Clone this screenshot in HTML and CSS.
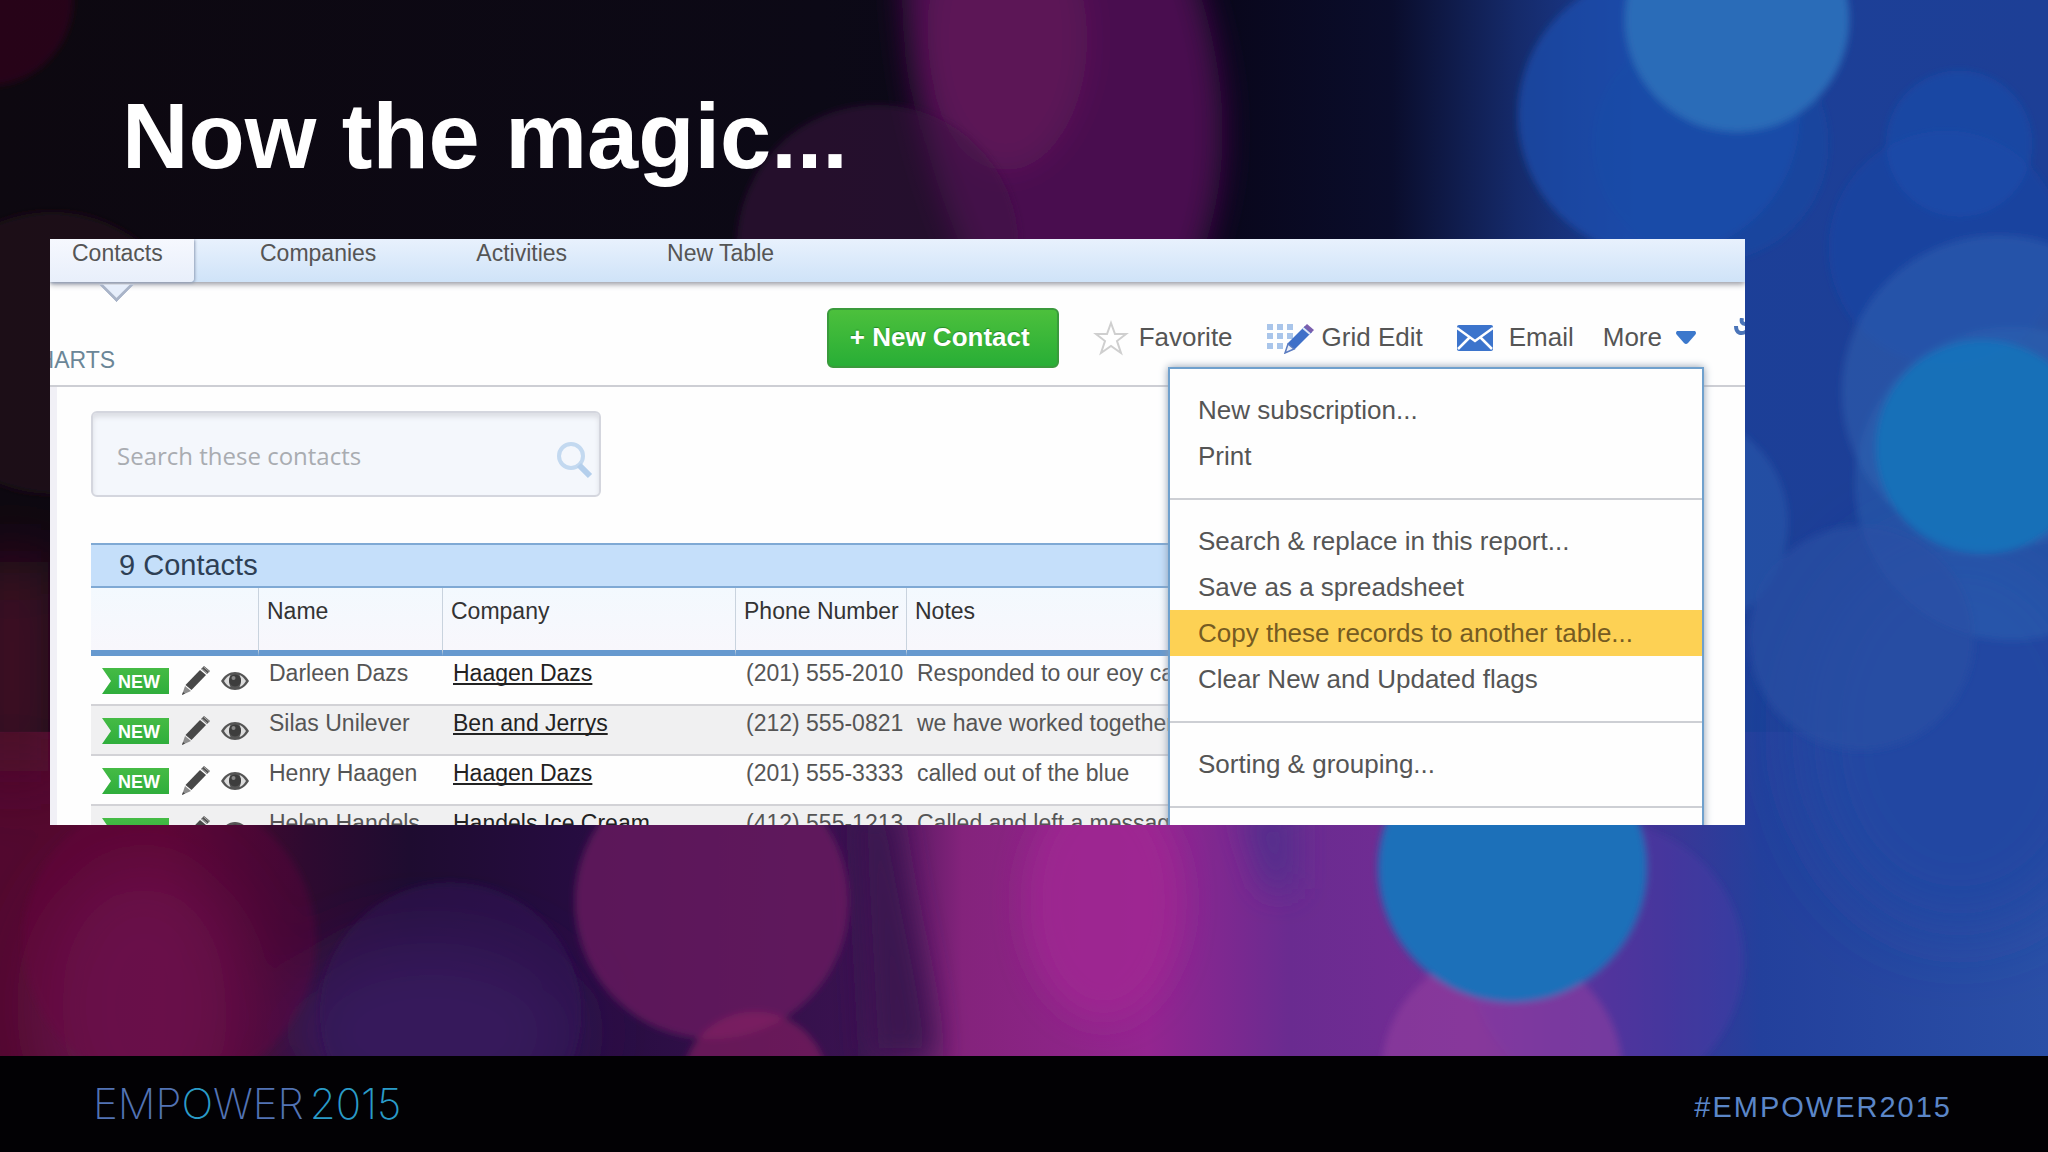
FILE: index.html
```html
<!DOCTYPE html>
<html lang="en">
<head>
<meta charset="utf-8">
<title>Now the magic…</title>
<link rel="stylesheet" href="styles.css">
</head>
<body>
<svg width="0" height="0" class="defs" aria-hidden="true">
  <symbol id="pencil" viewBox="0 0 30 30">
    <path d="M2 29l3-9 6 5z" fill="#8d8d8d"/><path d="M2 29l1-3 2 1.500z" fill="#444"/>
    <path d="M5.500 19L20 4l6 5-14.500 15z" fill="#484848"/>
    <path d="M21 3l3-3 6 5-3 3z" fill="#555"/><path d="M21.500 2.500l6 5M23.500 .8l6 5" stroke="#aaa" stroke-width="1"/>
  </symbol>
  <symbol id="eye" viewBox="0 0 28 20">
    <path d="M0 10C7-2 21-2 28 10 21 22 7 22 0 10z" fill="#555"/>
    <path d="M3 10C6 5.500 8 4.500 9.500 4 7.500 8 7.500 12 9.500 16 7 15 5 13.500 3 10zM25 10c-3-4.500-5-5.500-6.500-6 2 4 2 8 0 12 2.500-1 4.500-2.500 6.500-6z" fill="#ddd"/>
    <circle cx="14" cy="9.500" r="6" fill="#3d3d3d"/><circle cx="12.500" cy="7" r="2" fill="#888"/>
  </symbol>
</svg>
<main class="slide">
  <svg class="bokeh" viewBox="0 0 1568 808" preserveAspectRatio="none" aria-hidden="true">
    <defs>
      <filter id="b40" x="-50%" y="-50%" width="200%" height="200%"><feGaussianBlur stdDeviation="26"/></filter>
      <filter id="b20" x="-50%" y="-50%" width="200%" height="200%"><feGaussianBlur stdDeviation="12"/></filter>
      <filter id="b3" x="-20%" y="-20%" width="140%" height="140%"><feGaussianBlur stdDeviation="3"/></filter>
      <linearGradient id="base"><stop offset="0" stop-color="#0d0810"/><stop offset=".4" stop-color="#0c0916"/><stop offset=".6" stop-color="#09071c"/><stop offset=".68" stop-color="#0a0d2c"/><stop offset=".74" stop-color="#152a6a"/><stop offset=".8" stop-color="#1c3f98"/><stop offset="1" stop-color="#1d3f96"/></linearGradient>
      <linearGradient id="glow"><stop offset="0" stop-color="#52082f"/><stop offset=".08" stop-color="#55082f"/><stop offset=".15" stop-color="#2e0a30"/><stop offset=".2" stop-color="#1e0c30"/><stop offset=".28" stop-color="#260c40"/><stop offset=".42" stop-color="#3a1250"/><stop offset=".47" stop-color="#84237c"/><stop offset=".56" stop-color="#942590"/><stop offset=".63" stop-color="#6a2b90"/><stop offset=".72" stop-color="#752d96"/><stop offset=".81" stop-color="#3e3596"/><stop offset=".86" stop-color="#23409c"/><stop offset="1" stop-color="#2a4fa6"/></linearGradient>
    </defs>
    <rect width="1568" height="808" fill="url(#base)"/>
    <rect y="560" width="1568" height="248" fill="url(#glow)"/>
    <g filter="url(#b40)">
      <ellipse cx="110" cy="770" rx="80" ry="110" fill="#6d1c58" fill-opacity=".7"/>
      <ellipse cx="330" cy="790" rx="110" ry="70" fill="#3a1c60"/>
      <ellipse cx="1500" cy="560" rx="120" ry="150" fill="#2146a2"/>
      <rect x="-20" y="430" width="58" height="160" fill="#48072a"/>
    </g>
    <g filter="url(#b20)">
      <path d="M690-30h220c34 90 34 170 4 240H745C705 120 695 60 690-30z" fill="#4a1150"/>
      <ellipse cx="770" cy="30" rx="62" ry="100" fill="#601a58" fill-opacity=".8"/>
      <ellipse cx="845" cy="690" rx="60" ry="90" fill="#a02792" fill-opacity=".8"/>
      <path d="M655 620h30c10 80 30 140 30 190h-50z" fill="#3a1250"/>
      <path d="M950 620h40v60h-20z" fill="#522d8c"/>
    </g>
    <g filter="url(#b3)">
      <circle cx="-10" cy="0" r="66" fill="#35081d" fill-opacity=".6"/>
      <circle cx="40" cy="270" r="108" fill="#210e1c" fill-opacity=".8"/>
      <circle cx="672" cy="188" r="108" fill="#3c1042" fill-opacity=".5"/>
      <circle cx="1270" cy="88" r="108" fill="#1850b0" fill-opacity=".7"/>
      <circle cx="1310" cy="110" r="90" fill="#1a4ca6" fill-opacity=".5"/>
      <circle cx="1490" cy="190" r="90" fill="#1548a8" fill-opacity=".5"/>
      <circle cx="1500" cy="110" r="56" fill="#1a50b0" fill-opacity=".5"/>
      <circle cx="1330" cy="15" r="86" fill="#2a6cb8"/>
      <circle cx="1285" cy="400" r="84" fill="#2c5cb0" fill-opacity=".5"/>
      <circle cx="1530" cy="300" r="120" fill="#3a6cb8" fill-opacity=".42"/>
      <circle cx="1540" cy="370" r="120" fill="#2c66b4" fill-opacity=".45"/>
      <circle cx="1518" cy="342" r="82" fill="#1375bd" fill-opacity=".8"/>
      <circle cx="1425" cy="488" r="86" fill="#2850a4" fill-opacity=".7"/>
      <circle cx="545" cy="690" r="105" fill="#6c1c62" fill-opacity=".75"/>
      <circle cx="130" cy="720" r="112" fill="#6c1242" fill-opacity=".3"/>
      <circle cx="345" cy="775" r="100" fill="#341858" fill-opacity=".5"/>
      <circle cx="1230" cy="735" r="105" fill="#5b35ac" fill-opacity=".3"/>
      <circle cx="1150" cy="820" r="92" fill="#9a40a0" fill-opacity=".5"/>
      <circle cx="578" cy="830" r="56" fill="#8a2262" fill-opacity=".6"/>
      <circle cx="1158" cy="664" r="103" fill="#1b70b9"/>
    </g>
  </svg>

  <h1 class="title">Now the magic...</h1>

  <section class="panel">
    <nav class="tabs">
      <a class="tab current" href="#">Contacts</a>
      <a class="tab" href="#">Companies</a>
      <a class="tab" href="#">Activities</a>
      <a class="tab" href="#">New Table</a>
    </nav>

    <div class="toolbar">
      <a class="charts" href="#">CHARTS</a>
      <button class="new-contact" type="button">+ New Contact</button>
      <button class="action favorite" type="button">
        <svg width="36" height="36" viewBox="0 0 36 36" aria-hidden="true"><path d="M18 3l4 11h11l-9 7 4 12-10-7-10 7 4-12-9-7h11z" fill="#fff" stroke="#cfcfcf" stroke-width="2"/></svg>
        Favorite</button>
      <button class="action grid-edit" type="button">
        <svg width="47" height="32" viewBox="0 0 47 32" aria-hidden="true">
          <path d="M0 5h27M0 14h27M0 24h20" stroke="#a9c5ea" stroke-width="6" stroke-dasharray="6 4"/>
          <path d="M18 31l3-10 17-17 7 6-17 17z" fill="#3f70c8"/><path d="M18 31l3-9 6 5z" fill="#e9eef8" stroke="#5b7cc0" stroke-width="1.500"/>
          <path d="M37 5l3-3 7 6-3 3z" fill="#7a5fae"/><path d="M36 6l7 6" stroke="#dfe6f6" stroke-width="2"/>
        </svg>
        Grid Edit</button>
      <button class="action email" type="button">
        <svg width="36" height="26" viewBox="0 0 36 26" aria-hidden="true"><rect width="36" height="26" rx="2" fill="#3c74cc"/><path d="M0 3l18 13L36 3M1 24l12-12M35 24L23 12" fill="none" stroke="#fff" stroke-width="2.500"/></svg>
        Email</button>
      <button class="action more" type="button">More
        <svg width="20" height="13" viewBox="0 0 20 13" aria-hidden="true"><path d="M1 0h18q2 2 0 4l-7 8q-2 2-4 0L1 4q-2-2 0-4z" fill="#3c78cc"/></svg></button>
      <button class="action wrench" type="button" aria-label="Settings">
        <svg width="11" height="20" viewBox="0 0 11 20" aria-hidden="true"><path d="M2 8c0 7 5 9 11 5M8 0c-1 4 0 6 4 6" fill="none" stroke="#4a74b8" stroke-width="4"/></svg></button>
    </div>

    <div class="report">
      <form class="search">
        <input type="search" placeholder="Search these contacts" aria-label="Search these contacts">
        <svg width="38" height="38" viewBox="0 0 38 38" aria-hidden="true"><circle cx="15" cy="15" r="12" fill="none" stroke="#c3d9f0" stroke-width="4"/><path d="M23 24l11 11" stroke="#b4cfec" stroke-width="6"/></svg>
      </form>

      <table class="contacts">
        <caption>9 Contacts</caption>
        <colgroup><col class="c-tools"><col class="c-name"><col class="c-company"><col class="c-phone"><col></colgroup>
        <thead><tr><th></th><th>Name</th><th>Company</th><th>Phone Number</th><th>Notes</th></tr></thead>
        <tbody>
          <tr><td><div class="tools"><span class="flag">NEW</span><svg width="30" height="30"><use href="#pencil"/></svg><svg width="28" height="20"><use href="#eye"/></svg></div></td><td>Darleen Dazs</td><td><a href="#">Haagen Dazs</a></td><td>(201) 555-2010</td><td>Responded to our eoy ca</td></tr>
          <tr><td><div class="tools"><span class="flag">NEW</span><svg width="30" height="30"><use href="#pencil"/></svg><svg width="28" height="20"><use href="#eye"/></svg></div></td><td>Silas Unilever</td><td><a href="#">Ben and Jerrys</a></td><td>(212) 555-0821</td><td>we have worked together</td></tr>
          <tr><td><div class="tools"><span class="flag">NEW</span><svg width="30" height="30"><use href="#pencil"/></svg><svg width="28" height="20"><use href="#eye"/></svg></div></td><td>Henry Haagen</td><td><a href="#">Haagen Dazs</a></td><td>(201) 555-3333</td><td>called out of the blue</td></tr>
          <tr><td><div class="tools"><span class="flag">NEW</span><svg width="30" height="30"><use href="#pencil"/></svg><svg width="28" height="20"><use href="#eye"/></svg></div></td><td>Helen Handels</td><td><a href="#">Handels Ice Cream</a></td><td>(412) 555-1213</td><td>Called and left a messag</td></tr>
        </tbody>
      </table>
    </div>

    <div class="menu">
      <div class="group"><button type="button">New subscription...</button><button type="button">Print</button></div>
      <div class="group"><button type="button">Search &amp; replace in this report...</button><button type="button">Save as a spreadsheet</button><button class="active" type="button">Copy these records to another table...</button><button type="button">Clear New and Updated flags</button></div>
      <div class="group"><button type="button">Sorting &amp; grouping...</button></div>
    </div>
  </section>
</main>
<footer class="footer">
  <div class="logo"><span>EMP<b>O</b>WER</span><b>2015</b></div>
  <div class="hashtag">#EMPOWER2015</div>
</footer>
</body>
</html>
```
FILE: styles.css
```css
* { box-sizing: border-box; }

body {
  margin: 0;
  height: 100vh;
  display: flex;
  flex-direction: column;
  background: #020104;
  font-family: "Liberation Sans", Arial, sans-serif;
  color: #555;
}

.defs { position: absolute; }

button {
  border: 0;
  padding: 0;
  background: none;
  font: inherit;
  color: inherit;
  text-align: left;
  white-space: nowrap;
}

a { color: inherit; text-decoration: none; }
svg { flex: none; display: block; }

/* Slide */
.slide {
  position: relative;
  flex: 1;
  min-height: 0;
  display: flex;
  flex-direction: column;
  padding: 0 303px 231px 50px;
  overflow: hidden;
}

.bokeh { position: absolute; inset: 0; width: 100%; height: 100%; }

.title {
  position: relative;
  margin: 0;
  padding: 72px 0 39px 72px;
  font: bold 92px/128px "Liberation Sans", Arial, sans-serif;
  color: #fff;
}

.panel {
  position: relative;
  flex: 1;
  min-height: 0;
  overflow: hidden;
  background: #fefefe;
}

/* Tabs */
.tabs {
  display: flex;
  height: 43px;
  background: linear-gradient(#e8f1fd, #cfe3f8);
  box-shadow: 0 2px 6px #8e909a;
  font-size: 23px;
  line-height: 28px;
}

.tab + .tab { padding: 0 34px 0 66px; }

.tab.current {
  position: relative;
  width: 144px;
  padding-left: 22px;
  background: linear-gradient(#f6f8fe, #e8effb);
  border-radius: 0 0 4px 0;
  box-shadow: 1px 1px 3px #8f9db5;
}

.tab.current::after {
  content: "";
  position: absolute;
  left: 54px;
  top: 33px;
  width: 22px;
  height: 22px;
  background: #e6eefb;
  border: solid #a9b4c8;
  border-width: 0 3px 3px 0;
  rotate: 45deg;
  clip-path: polygon(100% 0, 100% 100%, 0 100%);
}

/* Toolbar */
.toolbar {
  display: flex;
  align-items: center;
  gap: 26px;
  height: 105px;
  padding-top: 8px;
  border-bottom: 2px solid #cdced4;
  font-size: 26px;
}

.charts {
  align-self: flex-end;
  margin: 0 auto 12px -29px;
  font-size: 23px;
  line-height: 26px;
  color: #6b8697;
}

.new-contact {
  height: 60px;
  margin-right: 8px;
  padding: 0 27px 0 21px;
  border: 2px solid #3a9a3c;
  border-radius: 6px;
  background: linear-gradient(#4cc03c, #28ae36);
  color: #fff;
  font-weight: bold;
  text-shadow: 0 -1px 1px #278a2a;
}

.action { display: flex; align-items: center; gap: 10px; }
.favorite, .grid-edit { margin-right: 8px; }
.grid-edit { gap: 8px; }
.email { gap: 16px; margin-right: 3px; }
.more { gap: 14px; }
.wrench { margin: -20px 0 0 12px; }

/* Report */
.report {
  padding: 24px 0 0 34px;
  border-left: 7px solid #f1f0f6;
}

.search {
  display: flex;
  align-items: center;
  width: 510px;
  height: 86px;
  padding: 4px 5px 0 24px;
  border: 2px solid #d4d6de;
  border-radius: 6px;
  background: #f4f7fc;
  box-shadow: inset 0 4px 5px #dcdee4;
}

.search input {
  flex: 1;
  min-width: 0;
  padding: 0;
  border: 0;
  outline: 0;
  background: none;
  font: 24px/32px "Open Sans", sans-serif;
}

.search input::placeholder { color: #a9acb1; opacity: 1; }
.search svg { margin-top: 8px; }

.contacts {
  width: calc(100% - 80px);
  margin-top: 46px;
  table-layout: fixed;
  border-spacing: 0;
  font-size: 23px;
  line-height: 30px;
  white-space: nowrap;
}

.contacts caption {
  height: 45px;
  padding-left: 28px;
  border: solid #7fa9d4;
  border-width: 2px 0;
  background: #c5dffa;
  color: #2e3f55;
  font-size: 29px;
  line-height: 41px;
  text-align: left;
}

.c-tools { width: 167px; }
.c-name { width: 184px; }
.c-company { width: 293px; }
.c-phone { width: 171px; }

.contacts th {
  height: 68px;
  padding: 8px 0 0 8px;
  border-bottom: 6px solid #6699cf;
  border-left: 1px solid #c9d3de;
  background: linear-gradient(#f3f9fe, #f8f7fc);
  color: #333;
  font-weight: normal;
  text-align: left;
  vertical-align: top;
}

.contacts th:first-child { border-left: 0; }

.contacts td {
  height: 50px;
  padding: 2px 0 0 11px;
  border-bottom: 2px solid #d2d2d6;
  vertical-align: top;
}

.contacts tr:nth-child(even) td { background: #f0f0f1; }
.contacts td a { color: #222; text-decoration: underline 2px; text-decoration-skip-ink: none; text-underline-offset: 2px; }

.tools { display: flex; align-items: center; gap: 11px; height: 46px; }

.flag {
  width: 67px;
  height: 26px;
  padding-left: 16px;
  background: linear-gradient(#45bb45, #2fae3c);
  clip-path: polygon(0 0, 100% 0, 100% 100%, 0 100%, 9px 50%);
  color: #fff;
  font-size: 18px;
  line-height: 28px;
  font-weight: bold;
}

/* Drop-down menu */
.menu {
  position: absolute;
  top: 128px;
  right: 41px;
  bottom: -10px;
  width: 536px;
  border: 2px solid #6fa0cd;
  background: #fefefe;
  box-shadow: 0 0 8px #8e9cb0;
  font-size: 26px;
}

.group { padding: 18px 0 19px; border-bottom: 2px solid #cdcfd4; }
.group button { display: block; width: 100%; height: 46px; padding: 0 28px; }
.group .active { background: #fdd154; color: #755b22; }

/* Footer */
.footer {
  display: flex;
  justify-content: space-between;
  align-items: center;
  height: 96px;
  padding: 4px 96px 4px 93px;
}

.logo {
  display: flex;
  gap: 6px;
  font: 200 42px/52px Inter, sans-serif;
  color: #5273b4;
}

.logo b { font-weight: 200; color: #2a9bc8; }

.hashtag { padding-top: 6px; font-size: 29px; letter-spacing: 2px; color: #5b86c8; }
```
